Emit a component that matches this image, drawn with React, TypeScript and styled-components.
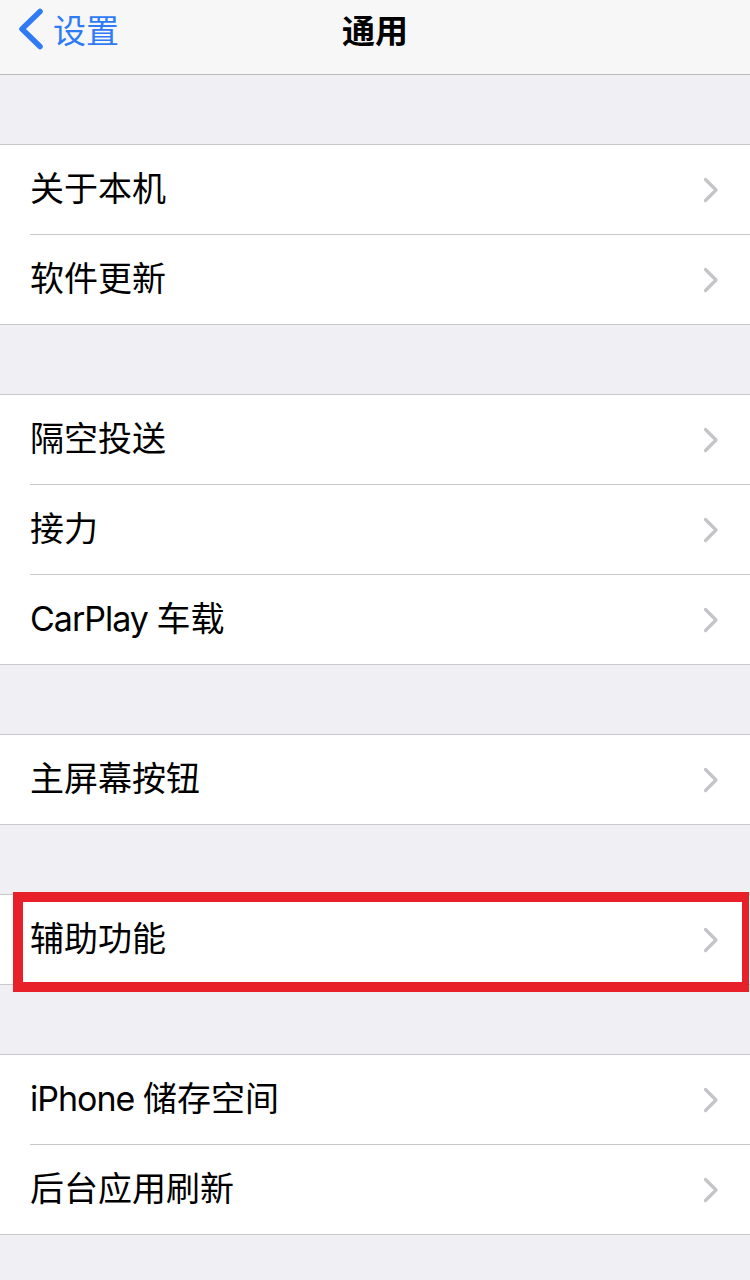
import styled, { createGlobalStyle } from "styled-components";

const GlobalStyle = createGlobalStyle`
  html, body {
    margin: 0;
    padding: 0;
    background: #efeff4;
  }
  body {
    font-family: "Inter", "Noto Sans CJK SC", sans-serif;
    -webkit-font-smoothing: antialiased;
  }
`;

const Page = styled.div`
  width: 750px;
  min-height: 1280px;
  background: #efeff4;
  padding-bottom: 46px;
`;

const NavBar = styled.header`
  height: 74px;
  background: #f7f7f8;
  border-bottom: 1px solid #b9b9bd;
  display: grid;
  grid-template-columns: 1fr auto 1fr;
  align-items: center;
`;

const BackButton = styled.button`
  justify-self: start;
  display: flex;
  align-items: center;
  gap: 9px;
  margin: 0 0 16px 17px;
  padding: 0;
  border: none;
  background: none;
  color: #2f7bf5;
  font-family: "Noto Sans CJK SC", sans-serif;
  font-size: 33px;
  line-height: 1;
`;

const Title = styled.h1`
  margin: 0 0 16px;
  font-family: "Noto Sans CJK SC", sans-serif;
  font-size: 33px;
  font-weight: 700;
  line-height: 1;
  color: #000;
`;

const Group = styled.ul`
  position: relative;
  list-style: none;
  margin: 69px 0 0;
  padding: 0;
  background: #fff;
  border-top: 1px solid #c8c7cc;
  border-bottom: 1px solid #c8c7cc;
`;

const Row = styled.li`
  position: relative;
  height: 89px;
  display: flex;
  align-items: center;
  justify-content: space-between;
  padding: 0 31px 0 30px;
  font-size: 34px;
  color: #000;

  & + & {
    border-top: 1px solid #c8c7cc;
    margin-left: 30px;
    padding-left: 0;
  }
`;

const Label = styled.span`
  line-height: 1;
  margin-bottom: 2px;
`;

const Latin = styled.span`
  letter-spacing: -1px;
`;

// red frame drawn over the row it calls out
const Highlight = styled.div`
  position: absolute;
  top: -3px;
  left: 13px;
  right: 1px;
  height: 100px;
  border: 10px solid #e8202a;
  border-right-width: 7px;
  box-sizing: border-box;
  pointer-events: none;
`;

const Chevron = () => (
  <svg width="16" height="26" viewBox="0 0 16 26">
    <polyline
      points="2.5,2.5 13,13 2.5,23.5"
      fill="none"
      stroke="#c4c4c8"
      strokeWidth="3.2"
      strokeLinecap="round"
      strokeLinejoin="round"
    />
  </svg>
);

const BackChevron = () => (
  <svg width="27" height="42" viewBox="0 0 27 42">
    <polyline
      points="23,3.5 5,21 23,38.5"
      fill="none"
      stroke="#2f7bf5"
      strokeWidth="5.5"
      strokeLinecap="round"
      strokeLinejoin="round"
    />
  </svg>
);

interface Item {
  latin?: string;
  text: string;
}

const groups: Item[][] = [
  [{ text: "关于本机" }, { text: "软件更新" }],
  [{ text: "隔空投送" }, { text: "接力" }, { latin: "CarPlay", text: "车载" }],
  [{ text: "主屏幕按钮" }],
  [{ text: "辅助功能" }],
  [{ latin: "iPhone", text: "储存空间" }, { text: "后台应用刷新" }],
];

function App() {
  return (
    <Page>
      <GlobalStyle />
      <NavBar>
        <BackButton>
          <BackChevron />
          设置
        </BackButton>
        <Title>通用</Title>
        <span />
      </NavBar>
      {groups.map((items, gi) => (
        <Group key={gi}>
          {items.map((item) => (
            <Row key={item.text}>
              <Label>
                {item.latin && <Latin>{item.latin} </Latin>}
                {item.text}
              </Label>
              <Chevron />
            </Row>
          ))}
          {items[0].text === "辅助功能" && <Highlight />}
        </Group>
      ))}
    </Page>
  );
}

export default App;
